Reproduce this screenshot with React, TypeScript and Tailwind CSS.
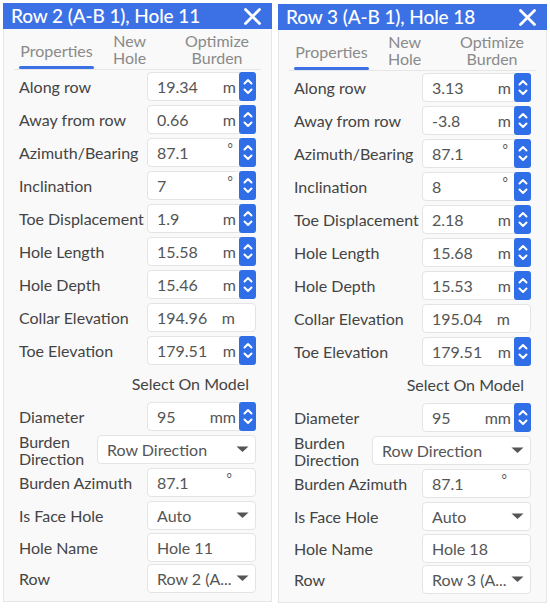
import React from "react";

type Field =
  | { kind: "num"; label: string; value: string; unit: string; spin: boolean }
  | { kind: "text"; label: string; value: string }
  | { kind: "select"; label: string; value: string }
  | { kind: "wide"; label: string; value: string }
  | { kind: "link"; label: string };

function Chevron({ up }: { up: boolean }) {
  return (
    <svg width="10" height="7" viewBox="0 0 10 7" fill="none">
      <path
        d={up ? "M1.5 5.5 L5 2 L8.5 5.5" : "M1.5 1.5 L5 5 L8.5 1.5"}
        stroke="white"
        strokeWidth="2"
        strokeLinecap="round"
        strokeLinejoin="round"
      />
    </svg>
  );
}

function Spinner() {
  return (
    <div className="w-[17px] self-stretch -my-px -mr-px bg-[#2f6ee6] rounded-[3px] flex flex-col items-center justify-center gap-[3px]">
      <Chevron up />
      <Chevron up={false} />
    </div>
  );
}

function Caret() {
  return (
    <svg width="13" height="7" viewBox="0 0 13 7" className="mr-[6px]">
      <path d="M0.5 0.5 H12.5 L6.5 6 Z" fill="#555" />
    </svg>
  );
}

const boxCls =
  "h-[29px] flex items-center bg-white border border-[#e4e4e4] rounded-[4px] pl-[9px] text-[16px] text-[#555]";

function Row({ f, h }: { f: Field; h: string }) {
  if (f.kind === "link") {
    return (
      <div className={`flex items-center justify-end pr-[22px] ${h} text-[16px] text-[#444]`}>
        {f.label}
      </div>
    );
  }
  const labelEl =
    f.kind === "wide" ? (
      <div className="w-[78px] text-[16px] leading-[17px] text-[#444] whitespace-pre-line">{f.label}</div>
    ) : (
      <div className="flex-1 text-[16px] text-[#444] whitespace-nowrap">{f.label}</div>
    );
  let box: React.ReactNode = null;
  if (f.kind === "num") {
    box = (
      <div className={`w-[109px] ${boxCls}`}>
        <span className="flex-1">{f.value}</span>
        <span className={f.unit === "°" ? "mr-[3px] text-[13px] -mt-[8px]" : ""}>{f.unit}</span>
        {f.spin ? <div className="w-[3px]" /> : <div className="w-[20px]" />}
        {f.spin && <Spinner />}
      </div>
    );
  } else if (f.kind === "text") {
    box = (
      <div className={`w-[109px] ${boxCls}`}>
        <span className="flex-1">{f.value}</span>
      </div>
    );
  } else if (f.kind === "select") {
    box = (
      <div className={`w-[109px] ${boxCls}`}>
        <span className="flex-1 whitespace-nowrap overflow-hidden">{f.value}</span>
        <Caret />
      </div>
    );
  } else if (f.kind === "wide") {
    box = (
      <div className={`flex-1 ${boxCls} pl-[6px]`}>
        <span className="flex-1 whitespace-nowrap">{f.value}</span>
        <Caret />
      </div>
    );
  }
  return (
    <div className={`flex items-center ${h} pl-[15px] pr-[15px]`}>
      {labelEl}
      {box}
    </div>
  );
}

function Panel({
  title,
  fields,
  extra,
}: {
  title: string;
  fields: Field[];
  extra: string;
}) {
  return (
    <div className={`w-[269px] flex flex-col ${extra}`}>
      <div className="h-[26px] bg-[#3c71e6] flex items-center justify-between pl-[8px] pr-[10px]">
        <span className="text-white text-[19px] font-medium tracking-[-0.1px] whitespace-nowrap">{title}</span>
        <svg width="19" height="17" viewBox="0 0 19 17">
          <path d="M2.5 1.5 L16.5 15.5 M16.5 1.5 L2.5 15.5" stroke="white" strokeWidth="2.8" strokeLinecap="round" />
        </svg>
      </div>
      <div className="bg-[#f9f9f9] border border-t-0 border-[#e6e6e6] flex flex-col pb-[7px]">
        <div className="mx-[10px] h-[41px] flex items-stretch border-b border-[#e6e6e6] text-[16px] text-[#8a8a8a] leading-[17px]">
          <div className="ml-[5px] w-[75px] flex flex-col justify-center items-center relative">
            <span className="mt-[2px] whitespace-nowrap">Properties</span>
            <div className="absolute bottom-0 left-0 right-0 h-[3px] rounded-full bg-[#3c71e6]" />
          </div>
          <div className="ml-[19px] flex flex-col justify-center items-center text-center">
            <span>New</span>
            <span>Hole</span>
          </div>
          <div className="ml-auto mr-[12px] flex flex-col justify-center items-center text-center">
            <span>Optimize</span>
            <span>Burden</span>
          </div>
        </div>
        {fields.map((f, i) => (
          <Row key={i} f={f} h={i >= fields.length - 2 ? "h-[31px]" : "h-[33px]"} />
        ))}
      </div>
    </div>
  );
}

function makeFields(v: {
  along: string;
  away: string;
  inc: string;
  toe: string;
  len: string;
  depth: string;
  collar: string;
  toeEl: string;
  name: string;
  row: string;
}): Field[] {
  return [
    { kind: "num", label: "Along row", value: v.along, unit: "m", spin: true },
    { kind: "num", label: "Away from row", value: v.away, unit: "m", spin: true },
    { kind: "num", label: "Azimuth/Bearing", value: "87.1", unit: "°", spin: true },
    { kind: "num", label: "Inclination", value: v.inc, unit: "°", spin: true },
    { kind: "num", label: "Toe Displacement", value: v.toe, unit: "m", spin: true },
    { kind: "num", label: "Hole Length", value: v.len, unit: "m", spin: true },
    { kind: "num", label: "Hole Depth", value: v.depth, unit: "m", spin: true },
    { kind: "num", label: "Collar Elevation", value: v.collar, unit: "m", spin: false },
    { kind: "num", label: "Toe Elevation", value: v.toeEl, unit: "m", spin: true },
    { kind: "link", label: "Select On Model" },
    { kind: "num", label: "Diameter", value: "95", unit: "mm", spin: true },
    { kind: "wide", label: "Burden\nDirection", value: "Row Direction" },
    { kind: "num", label: "Burden Azimuth", value: "87.1", unit: "°", spin: false },
    { kind: "select", label: "Is Face Hole", value: "Auto" },
    { kind: "text", label: "Hole Name", value: v.name },
    { kind: "select", label: "Row", value: v.row },
  ];
}

export default function App() {
  const left = makeFields({
    along: "19.34",
    away: "0.66",
    inc: "7",
    toe: "1.9",
    len: "15.58",
    depth: "15.46",
    collar: "194.96",
    toeEl: "179.51",
    name: "Hole 11",
    row: "Row 2 (A...",
  });
  const right = makeFields({
    along: "3.13",
    away: "-3.8",
    inc: "8",
    toe: "2.18",
    len: "15.68",
    depth: "15.53",
    collar: "195.04",
    toeEl: "179.51",
    name: "Hole 18",
    row: "Row 3 (A...",
  });
  return (
    <div
      className="w-[550px] h-[613px] bg-white flex items-start pl-[3px] pt-[3px] gap-[6px]"
      style={{ fontFamily: "Lato, 'Noto Sans', sans-serif" }}
    >
      <Panel title="Row 2 (A-B 1), Hole 11" fields={left} extra="" />
      <Panel title="Row 3 (A-B 1), Hole 18" fields={right} extra="mt-[1px]" />
    </div>
  );
}
